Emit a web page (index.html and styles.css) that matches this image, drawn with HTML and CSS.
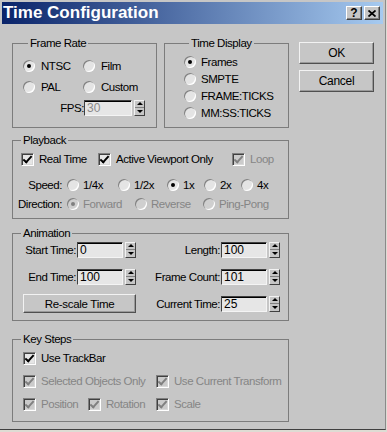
FILE: index.html
```html
<!DOCTYPE html>
<html lang="en">
<head>
  <meta charset="UTF-8" />
  <title>Time Configuration</title>
  <link rel="stylesheet" href="styles.css">
</head>
<body>
  <div class="window">
    <div class="titlebar">
      <span class="title">Time Configuration</span>
      <div class="caption-btns">
        <span class="cap-btn">?</span>
        <span class="cap-btn">
          <svg width="8" height="7" viewBox="0 0 8 7"><path d="M0.5 0.5 L7.5 6.5 M7.5 0.5 L0.5 6.5" stroke="#000" stroke-width="1.7" fill="none"/></svg>
        </span>
      </div>
    </div>

    <div class="client">
      <div class="top-row">
        <fieldset class="group frame-rate">
          <legend>Frame Rate</legend>
          <div class="fr-grid">
            <span class="opt"><span class="radio on"></span>NTSC</span>
            <span class="opt"><span class="radio"></span>Film</span>
            <span class="opt"><span class="radio"></span>PAL</span>
            <span class="opt"><span class="radio"></span>Custom</span>
          </div>
          <div class="fps-row">
            <span>FPS:</span>
            <span class="field wide dis">30</span>
            <span class="spin"><i class="up"></i><i class="dn"></i></span>
          </div>
        </fieldset>

        <fieldset class="group time-display">
          <legend>Time Display</legend>
          <div class="td-row"><span class="radio on"></span>Frames</div>
          <div class="td-row"><span class="radio"></span>SMPTE</div>
          <div class="td-row"><span class="radio"></span>FRAME:TICKS</div>
          <div class="td-row"><span class="radio"></span>MM:SS:TICKS</div>
        </fieldset>

        <div class="btn-col">
          <button class="btn">OK</button>
          <button class="btn">Cancel</button>
        </div>
      </div>

      <fieldset class="group playback">
        <legend>Playback</legend>
        <div class="pb-row checks">
          <span class="opt w77"><span class="check on"></span>Real Time</span>
          <span class="opt w134"><span class="check on"></span>Active Viewport Only</span>
          <span class="opt dis"><span class="check on"></span>Loop</span>
        </div>
        <div class="pb-row speed">
          <span class="row-lbl">Speed:</span>
          <span class="opt w51"><span class="radio"></span>1/4x</span>
          <span class="opt w49"><span class="radio"></span>1/2x</span>
          <span class="opt w37"><span class="radio on"></span>1x</span>
          <span class="opt w37"><span class="radio"></span>2x</span>
          <span class="opt"><span class="radio"></span>4x</span>
        </div>
        <div class="pb-row direction">
          <span class="row-lbl">Direction:</span>
          <span class="opt w68 dis"><span class="radio on"></span>Forward</span>
          <span class="opt w68 dis"><span class="radio"></span>Reverse</span>
          <span class="opt dis"><span class="radio"></span>Ping-Pong</span>
        </div>
      </fieldset>

      <fieldset class="group animation">
        <legend>Animation</legend>
        <div class="an-row">
          <div class="cell-a">
            <span class="an-lbl">Start Time:</span>
            <span class="field">0</span>
            <span class="spin"><i class="up"></i><i class="dn"></i></span>
          </div>
          <span class="an-lbl right">Length:</span>
          <span class="field">100</span>
          <span class="spin"><i class="up"></i><i class="dn"></i></span>
        </div>
        <div class="an-row">
          <div class="cell-a">
            <span class="an-lbl">End Time:</span>
            <span class="field">100</span>
            <span class="spin"><i class="up"></i><i class="dn"></i></span>
          </div>
          <span class="an-lbl right">Frame Count:</span>
          <span class="field">101</span>
          <span class="spin"><i class="up"></i><i class="dn"></i></span>
        </div>
        <div class="an-row">
          <div class="cell-a">
            <button class="btn rescale">Re-scale Time</button>
          </div>
          <span class="an-lbl right">Current Time:</span>
          <span class="field">25</span>
          <span class="spin"><i class="up"></i><i class="dn"></i></span>
        </div>
      </fieldset>

      <fieldset class="group key-steps">
        <legend>Key Steps</legend>
        <div class="ks-row">
          <span class="opt"><span class="check on"></span>Use TrackBar</span>
        </div>
        <div class="ks-row">
          <span class="opt w133 dis"><span class="check on"></span>Selected Objects Only</span>
          <span class="opt dis"><span class="check on"></span>Use Current Transform</span>
        </div>
        <div class="ks-row">
          <span class="opt w65 dis"><span class="check on"></span>Position</span>
          <span class="opt w68 dis"><span class="check on"></span>Rotation</span>
          <span class="opt dis"><span class="check on"></span>Scale</span>
        </div>
      </fieldset>
    </div>
  </div>
</body>
</html>
```

FILE: styles.css
```css
* {
  box-sizing: border-box;
}
body {
  margin: 0;
  background: #dedcd4;
  font-family: "Liberation Sans", Arial, sans-serif;
  font-size: 11.5px;
  letter-spacing: -0.45px;
  color: #000;
}
.window {
  width: 386px;
  height: 430px;
  background: #c6c6c6;
  border-right: 1px solid #8a8a8a;
  border-bottom: 1px solid #404040;
  padding-top: 2px;
}
.titlebar {
  height: 22px;
  margin: 0 2px;
  padding-left: 1px;
  display: flex;
  align-items: center;
  justify-content: space-between;
  background: linear-gradient(to right, #0a246a, #a6caf0);
}
.title {
  color: #fff;
  font-size: 17px;
  font-weight: bold;
  letter-spacing: 0;
  line-height: 22px;
}
.caption-btns {
  display: flex;
  gap: 2px;
  margin-right: 3px;
}
.cap-btn {
  width: 16px;
  height: 14px;
  display: flex;
  align-items: center;
  justify-content: center;
  background: #c6c6c6;
  border: 1px solid;
  border-color: #fff #404040 #404040 #fff;
  box-shadow: inset -1px -1px 0 #808080;
  font-size: 12px;
  font-weight: bold;
  letter-spacing: 0;
  line-height: 12px;
}

.client {
  padding: 12px 0 0 12px;
}
.top-row {
  display: flex;
  height: 92px;
}

/* group boxes */
.group {
  margin: 0;
  padding: 0 0 0 3px;
  min-width: 0;
  border: 1px solid #7c7c7c;
}
.group legend {
  margin-left: 5px;
  padding: 0 2px;
  line-height: 14px;
  height: 14px;
}
.frame-rate {
  width: 145px;
  height: 92px;
  padding: 5px 11px 0 10px;
}
.time-display {
  width: 125px;
  height: 92px;
  margin-left: 7px;
  padding: 3px 0 0 19px;
}
.playback {
  width: 277px;
  height: 86px;
  margin-top: 5px;
}
.animation {
  width: 277px;
  height: 95px;
  margin-top: 7px;
}
.key-steps {
  width: 277px;
  height: 90px;
  margin-top: 11px;
}

/* options */
.opt {
  display: flex;
  align-items: center;
  gap: 4px;
  white-space: nowrap;
}
.opt .check {
  margin-right: 1px;
}
.dis {
  color: #858585;
}
.radio {
  flex: none;
  width: 12px;
  height: 12px;
  border-radius: 50%;
  display: flex;
  align-items: center;
  justify-content: center;
  background: #e4e4e4;
  box-shadow: inset 1px 1px 0 #808080, inset -1px -1px 0 #fff;
}
.radio.on::after {
  content: '';
  width: 4px;
  height: 4px;
  border-radius: 50%;
  background: #000;
}
.dis .radio {
  background: #cfcfcf;
}
.dis .radio.on::after {
  background: #808080;
}
.check {
  flex: none;
  width: 13px;
  height: 13px;
  display: flex;
  align-items: center;
  justify-content: center;
  background: #e6e6e6;
  border: 1px solid;
  border-color: #808080 #fff #fff #808080;
  box-shadow: inset 1px 1px 0 #404040, inset -1px -1px 0 #d8d8d8;
}
.check.on::after {
  content: '';
  width: 3px;
  height: 7px;
  margin-top: -2px;
  border: solid #000;
  border-width: 0 2px 2px 0;
  transform: rotate(42deg);
}
.dis .check {
  background: #cbcbcb;
}
.dis .check.on::after {
  border-color: #808080;
}

/* frame rate */
.fr-grid {
  display: grid;
  grid-template-columns: 60px auto;
  grid-auto-rows: 21px;
}
.fr-grid .opt {
  gap: 6px;
}
.fps-row {
  height: 21px;
  display: flex;
  align-items: center;
  justify-content: flex-end;
}

/* time display */
.td-row {
  height: 17px;
  display: flex;
  align-items: center;
  gap: 5px;
}

/* buttons */
.btn-col {
  width: 75px;
  margin-left: 10px;
  padding-top: 6px;
  display: flex;
  flex-direction: column;
  gap: 6px;
}
.btn {
  height: 22px;
  padding: 0;
  font-family: inherit;
  font-size: 12px;
  letter-spacing: -0.3px;
  color: #000;
  background: #c6c6c6;
  border: 1px solid;
  border-color: #f2f2f2 #505050 #505050 #f2f2f2;
  box-shadow: inset -1px -1px 0 #9a9a9a;
}

/* inputs */
.field {
  width: 46px;
  height: 16px;
  padding-left: 2px;
  line-height: 14px;
  font-size: 12px;
  letter-spacing: 0;
  background: #e6e6e6;
  border: 1px solid;
  border-color: #404040 #f4f4f4 #f4f4f4 #404040;
  box-shadow: inset 0 1px 0 #000;
}
.field.wide {
  width: 48px;
}
.field.dis {
  color: #8a8a8a;
}
.spin {
  width: 11px;
  height: 16px;
  margin-left: 2px;
  display: flex;
  flex-direction: column;
  background: #c6c6c6;
  border: 1px solid;
  border-color: #f2f2f2 #404040 #404040 #f2f2f2;
}
.spin i {
  flex: 1;
  display: flex;
  align-items: center;
  justify-content: center;
}
.spin .up {
  border-bottom: 1px solid #808080;
}
.spin i::after {
  content: '';
  border-left: 3px solid transparent;
  border-right: 3px solid transparent;
}
.spin .up::after {
  border-bottom: 3px solid #000;
}
.spin .dn::after {
  border-top: 3px solid #000;
}

/* playback */
.pb-row {
  display: flex;
  align-items: center;
}
.pb-row.checks {
  height: 18px;
  margin-top: 3px;
  padding-left: 5px;
}
.pb-row.speed {
  height: 18px;
  margin-top: 8px;
}
.pb-row.direction {
  height: 19px;
}
.row-lbl {
  width: 46px;
  margin-right: 5px;
  text-align: right;
}
.w37 { width: 37px; }
.w49 { width: 49px; }
.w51 { width: 51px; }
.w65 { width: 65px; }
.w68 { width: 68px; }
.w77 { width: 77px; }
.w133 { width: 133px; }
.w134 { width: 134px; }

/* animation */
.an-row {
  height: 17px;
  margin-top: 10px;
  display: flex;
  align-items: center;
}
.an-row:first-of-type {
  margin-top: 1px;
}
.cell-a {
  width: 122px;
  display: flex;
  align-items: center;
}
.an-lbl {
  width: 61px;
  padding-right: 1px;
  text-align: right;
}
.an-lbl.right {
  width: 83px;
}
.btn.rescale {
  width: 113px;
  height: 19px;
  margin-left: 7px;
  font-size: 11.5px;
}

/* key steps */
.ks-row {
  height: 18px;
  margin-top: 5px;
  padding-left: 7px;
  display: flex;
  align-items: center;
}
.ks-row:first-of-type {
  margin-top: 3px;
}
```
